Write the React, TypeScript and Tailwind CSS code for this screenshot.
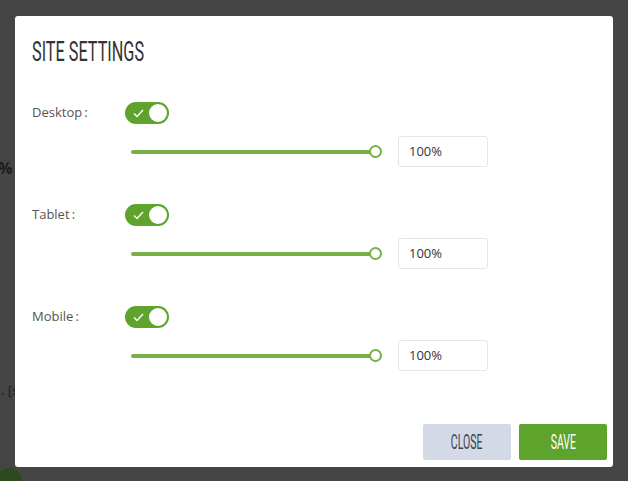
import { useState } from "react";

const devices = ["Desktop", "Tablet", "Mobile"];

function Toggle({ on, onClick }: { on: boolean; onClick: () => void }) {
  return (
    <button
      onClick={onClick}
      className={`relative flex items-center w-[44px] h-[22px] rounded-full ${on ? "bg-[#5ea32b]" : "bg-[#c8c8c8]"}`}
    >
      <svg width="11" height="9" viewBox="0 0 11 9" className="ml-[8px]">
        <path d="M1 4.5 L4 7.5 L10 1" fill="none" stroke="#fff" strokeWidth="1.4" />
      </svg>
      <span className="absolute right-[2px] top-[2px] w-[18px] h-[18px] rounded-full bg-white" />
    </button>
  );
}

function DeviceRow({ name }: { name: string }) {
  const [on, setOn] = useState(true);
  return (
    <div className="flex flex-col">
      <div className="flex items-center h-[22px]">
        <span className="w-[93px] text-[13px] text-[#555]">{name}{"\u2009"}:</span>
        <Toggle on={on} onClick={() => setOn(!on)} />
      </div>
      <div className="flex items-center mt-[12px] h-[31px]">
        <div className="ml-[99px] w-[251px] flex items-center">
          <div className="flex-1 h-[4px] rounded-full bg-[#78b046]" />
          <div className="w-[13px] h-[13px] -ml-[6px] rounded-full border-2 border-[#78b046] bg-white" />
        </div>
        <div className="ml-[16px] w-[90px] h-[31px] border border-[#e6e6e6] rounded-[3px] flex items-center pl-[10px] text-[13px] text-[#333]">
          100%
        </div>
      </div>
    </div>
  );
}

export default function App() {
  return (
    <div className="relative w-[628px] h-[481px] overflow-hidden bg-[#454545] font-['Open_Sans',sans-serif]">
      {/* page behind the overlay */}
      <span className="absolute left-[-2px] top-[156px] text-[16px] font-bold text-[#1c1c1c]">%</span>
      <span className="absolute left-[1px] top-[381px] text-[13px] text-[#1c1c1c]">. [s</span>
      <span className="absolute left-[-4px] top-[468px] w-[26px] h-[26px] rounded-full bg-[#2c4a1c]" />

      <div className="relative ml-[15px] mt-[16px] w-[598px] h-[451px] bg-white rounded-[3px] flex flex-col pl-[17px]">
        <div className="mt-[22px] h-[28px] leading-[28px]">
          <span className="inline-block origin-left scale-x-[0.58] text-[28px] font-normal text-[#333] font-['Roboto',sans-serif] whitespace-nowrap">
            SITE SETTINGS
          </span>
        </div>

        <div className="mt-[36px] flex flex-col gap-[37px]">
          {devices.map((d) => (
            <DeviceRow key={d} name={d} />
          ))}
        </div>

        <div className="mt-auto mb-[7px] mr-[6px] flex justify-end gap-[8px]">
          <button className="w-[88px] h-[36px] bg-[#d3dae6] rounded-[2px] flex items-center justify-center">
            <span className="inline-block scale-x-[0.5] text-[21px] leading-none text-[#3b4352] font-['Roboto',sans-serif]">CLOSE</span>
          </button>
          <button className="w-[88px] h-[36px] bg-[#5ea32b] rounded-[2px] flex items-center justify-center">
            <span className="inline-block scale-x-[0.5] text-[21px] leading-none text-white font-['Roboto',sans-serif]">SAVE</span>
          </button>
        </div>
      </div>
    </div>
  );
}
